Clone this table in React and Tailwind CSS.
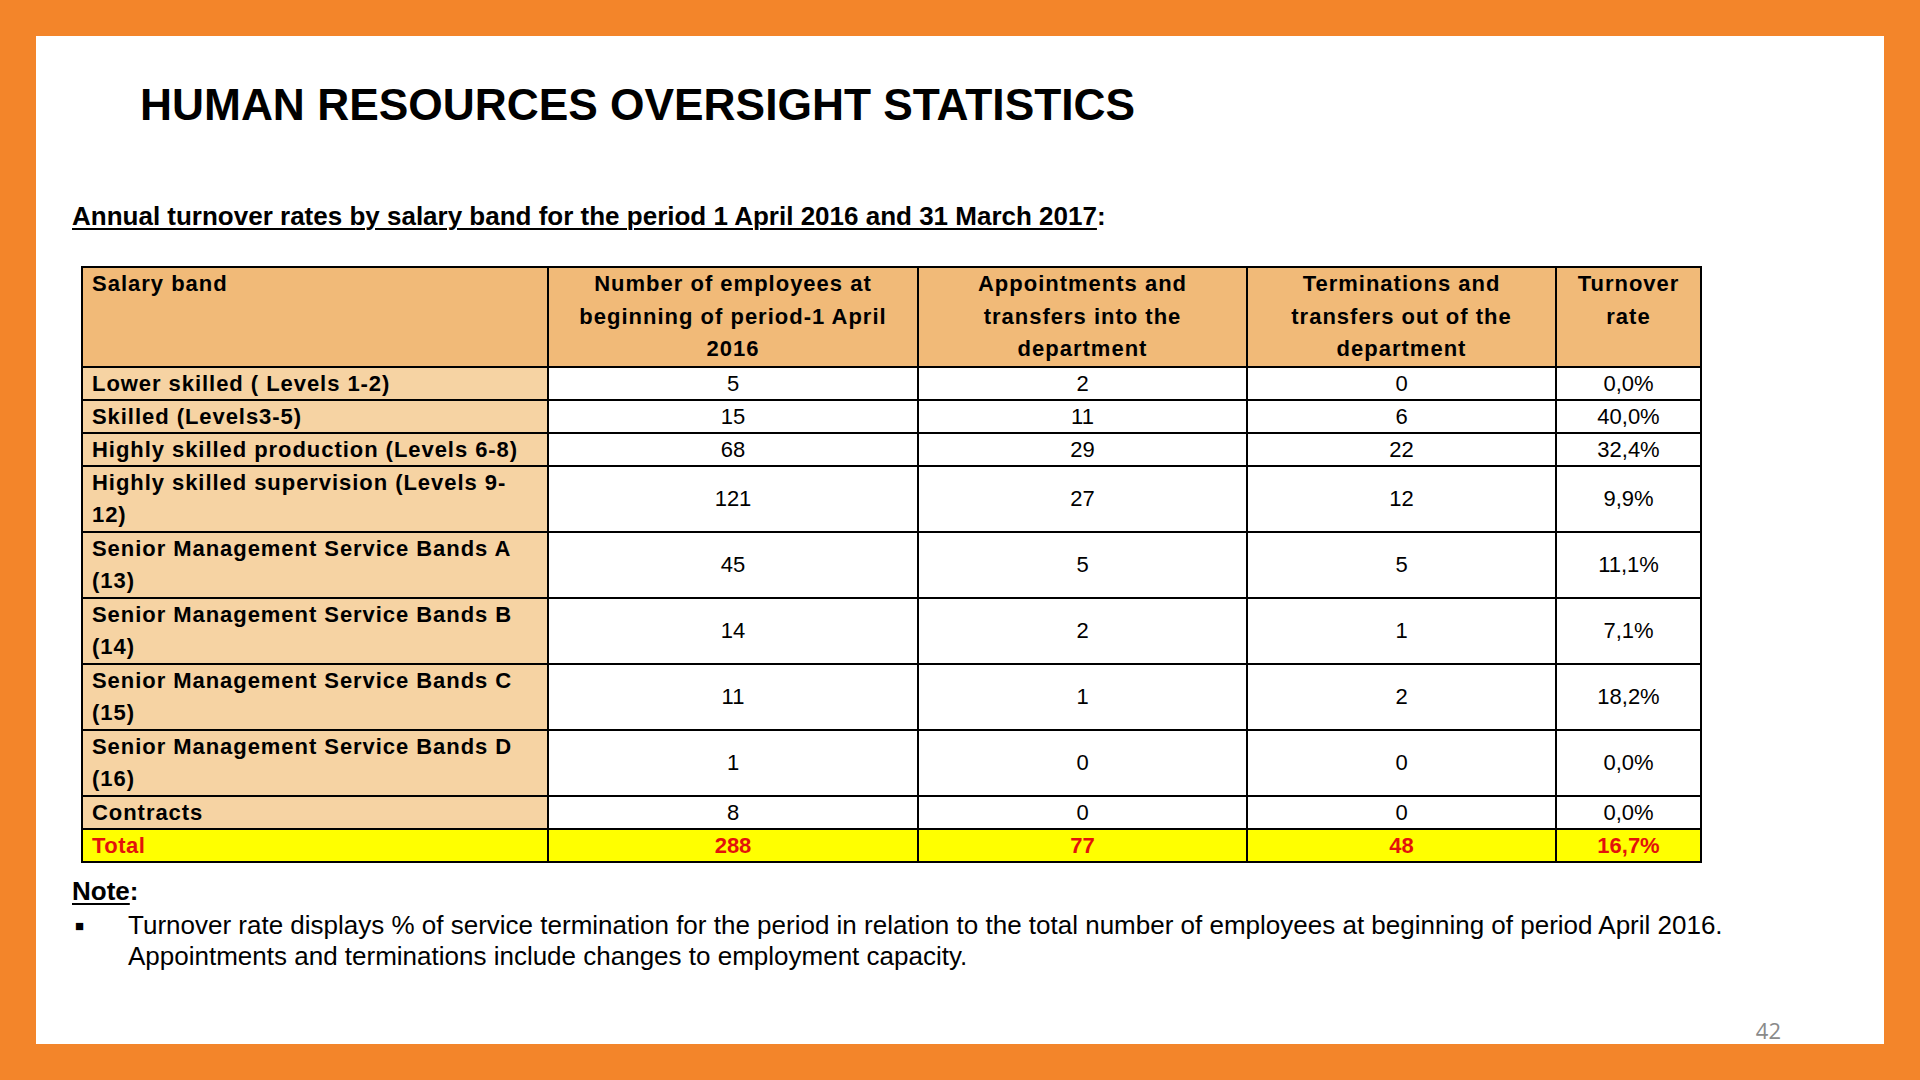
import React from 'react';

const rows = [
  { label: ['Lower skilled ( Levels 1-2)'], v: ['5', '2', '0', '0,0%'] },
  { label: ['Skilled (Levels3-5)'], v: ['15', '11', '6', '40,0%'] },
  { label: ['Highly skilled production (Levels 6-8)'], v: ['68', '29', '22', '32,4%'] },
  { label: ['Highly skilled supervision (Levels 9-', '12)'], v: ['121', '27', '12', '9,9%'] },
  { label: ['Senior Management Service Bands A', '(13)'], v: ['45', '5', '5', '11,1%'] },
  { label: ['Senior Management Service Bands B', '(14)'], v: ['14', '2', '1', '7,1%'] },
  { label: ['Senior Management Service Bands C', '(15)'], v: ['11', '1', '2', '18,2%'] },
  { label: ['Senior Management Service Bands D', '(16)'], v: ['1', '0', '0', '0,0%'] },
  { label: ['Contracts'], v: ['8', '0', '0', '0,0%'] },
];

const headers = [
  ['Number of employees at', 'beginning of period-1 April', '2016'],
  ['Appointments and', 'transfers into the', 'department'],
  ['Terminations and', 'transfers out of the', 'department'],
  ['Turnover', 'rate'],
];

const Lines = ({ lines }) =>
  lines.map((l, i) => (
    <React.Fragment key={i}>
      {i > 0 && <br />}
      {l}
    </React.Fragment>
  ));

export default function App() {
  return (
    <div className="h-screen w-full bg-[#f3852a] p-[36px] font-['Liberation_Sans',Arial,sans-serif] text-black">
      <div className="flex h-full w-full flex-col bg-white">
        <h1 className="ml-[104px] mt-[43px] text-[44.3px] font-bold leading-[52px]">
          HUMAN RESOURCES OVERSIGHT STATISTICS
        </h1>

        <p className="ml-[36px] mt-[70px] text-[26px] font-bold leading-[30px]">
          <span className="underline decoration-2 underline-offset-[3px]">
            Annual turnover rates by salary band for the period 1 April 2016 and 31 March 2017
          </span>
          :
        </p>

        <table className="ml-[45px] mt-[35px] w-[1619px] table-fixed border-collapse border-2 border-black text-[22px]">
          <colgroup>
            <col className="w-[466px]" />
            <col className="w-[370px]" />
            <col className="w-[329px]" />
            <col className="w-[309px]" />
            <col className="w-[145px]" />
          </colgroup>
          <thead>
            <tr className="bg-[#f1ba78] font-bold leading-[32.5px] tracking-[1px]">
              <th className="border-2 border-black px-[9px] py-0 text-left align-top font-bold">
                Salary band
              </th>
              {headers.map((h, i) => (
                <th key={i} className="border-2 border-black px-1 py-0 text-center align-top font-bold">
                  <Lines lines={h} />
                </th>
              ))}
            </tr>
          </thead>
          <tbody>
            {rows.map((r, i) => (
              <tr key={i} className={r.label.length > 1 ? 'leading-[32px]' : 'leading-[31px]'}>
                <td className="border-2 border-black bg-[#f6d3a3] px-[9px] py-0 align-top font-bold tracking-[0.95px]">
                  <Lines lines={r.label} />
                </td>
                {r.v.map((v, j) => (
                  <td key={j} className="border-2 border-black py-0 text-center align-middle">
                    {v}
                  </td>
                ))}
              </tr>
            ))}
            <tr className="bg-[#ffff00] font-bold leading-[31px] text-[#e3120b]">
              <td className="border-2 border-black px-[9px] py-0 align-top tracking-[0.5px]">Total</td>
              <td className="border-2 border-black py-0 text-center">288</td>
              <td className="border-2 border-black py-0 text-center">77</td>
              <td className="border-2 border-black py-0 text-center">48</td>
              <td className="border-2 border-black py-0 text-center">16,7%</td>
            </tr>
          </tbody>
        </table>

        <div className="ml-[36px] mt-[13px] text-[26px] leading-[31px]">
          <p className="mb-[3px] font-bold">
            <span className="underline decoration-2 underline-offset-[3px]">Note</span>:
          </p>
          <div className="flex">
            <span className="w-[56px] shrink-0 pl-[3px] text-[15px]">■</span>
            <p>
              Turnover rate displays % of service termination for the period in relation to the total number of employees at beginning of period April 2016.
              <br />
              Appointments and terminations include changes to employment capacity.
            </p>
          </div>
        </div>

        <div className="mt-auto flex justify-end pb-0 pr-[103px]">
          <span className="font-['Liberation_Sans_Narrow','Open_Sans',sans-serif] text-[22px] leading-[28px] text-[#8a8a8a]">42</span>
        </div>
      </div>
    </div>
  );
}
